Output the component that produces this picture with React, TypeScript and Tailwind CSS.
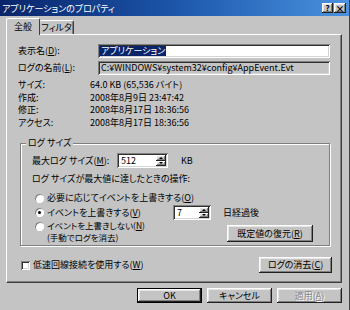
import React from "react";

const raised =
  "shadow-[inset_-1px_-1px_0_#202020,inset_1px_1px_0_#ffffff,inset_-2px_-2px_0_#808080,inset_2px_2px_0_#e6e6e6]";
const sunken =
  "shadow-[inset_1px_1px_0_#808080,inset_-1px_-1px_0_#ffffff,inset_2px_2px_0_#303030,inset_-2px_-2px_0_#d4d4d4]";

function Btn({ children, w, h = 16, disabled = false, def = false }: { children: React.ReactNode; w: number; h?: number; disabled?: boolean; def?: boolean }) {
  return (
    <div
      style={{ width: w, height: h }}
      className={`flex items-center justify-center bg-[#c4c4c4] ${def ? "border border-black" : ""}`}
    >
      <div
        className={`flex h-full w-full items-center justify-center whitespace-nowrap ${raised} ${
          disabled ? "text-[#8a8a8a] [text-shadow:1px_1px_0_#fff]" : "text-black"
        }`}
      >
        {children}
      </div>
    </div>
  );
}

function Spin({ value, w }: { value: string; w: number }) {
  return (
    <div style={{ width: w }} className={`flex h-[15px] items-stretch bg-white p-[2px] ${sunken}`}>
      <div className="flex flex-1 items-center pl-[2px] leading-none">{value}</div>
      <div className="flex w-[10px] flex-col">
        <div className={`flex flex-1 items-center justify-center bg-[#c4c4c4] ${raised}`}>
          <div className="h-0 w-0 border-x-[2px] border-b-[2px] border-x-transparent border-b-black" />
        </div>
        <div className={`flex flex-1 items-center justify-center bg-[#c4c4c4] ${raised}`}>
          <div className="h-0 w-0 border-x-[2px] border-t-[2px] border-x-transparent border-t-black" />
        </div>
      </div>
    </div>
  );
}

function Radio({ checked = false }: { checked?: boolean }) {
  return (
    <div className="relative h-[9px] w-[9px] shrink-0 rounded-full bg-white shadow-[inset_1px_1px_0_#808080,inset_-1px_-1px_0_#ffffff]">
      {checked && <div className="absolute left-[3px] top-[3px] h-[3px] w-[3px] rounded-full bg-black" />}
    </div>
  );
}

export default function App() {
  return (
    <div className="flex h-[310px] w-[350px] flex-col overflow-hidden whitespace-nowrap border-r border-r-[#404040] bg-[#c4c4c4] font-['Noto_Sans_CJK_JP',sans-serif] text-[9px] text-black [font-feature-settings:'palt']">
      {/* Title bar */}
      <div className="flex h-[16px] shrink-0 items-center justify-between bg-gradient-to-r from-[#0a246a] via-[#1c56aa] to-[#4a92e0] pl-[2px] pr-[3px]">
        <span className="leading-none text-white">アプリケーションのプロパティ</span>
        <div className="flex gap-[1px]">
          <div className={`flex h-[10px] w-[11px] items-center justify-center bg-[#c4c4c4] text-[8px] font-bold leading-none ${raised}`}>?</div>
          <div className={`flex h-[10px] w-[12px] items-center justify-center bg-[#c4c4c4] text-[9px] font-bold leading-none ${raised}`}>×</div>
        </div>
      </div>

      {/* Tabs */}
      <div className="relative z-10 ml-[6px] mt-[2px] flex items-end">
        <div className="-mb-[1px] flex h-[17px] w-[34px] items-center justify-center rounded-t-[2px] border-l border-t border-r border-l-white border-t-white border-r-[#404040] bg-[#c4c4c4] pb-[1px]">
          全般
        </div>
        <div className="flex h-[14px] w-[34px] items-center justify-center rounded-t-[2px] border-t border-r border-t-white border-r-[#404040] shadow-[inset_-1px_0_0_#808080]">
          フィルタ
        </div>
      </div>

      {/* Panel */}
      <div className="ml-[6px] flex h-[249px] w-[336px] shrink-0 flex-col border-l border-t border-b border-r border-l-white border-t-white border-b-[#404040] border-r-[#404040] pl-[11px] pt-[9px] shadow-[inset_-1px_-1px_0_#808080]">
        <div className="flex h-[14px] items-center">
          <span className="w-[80px]">表示名(<u>D</u>):</span>
          <div className={`flex h-[14px] w-[232px] items-center bg-white px-[2px] ${sunken}`}>
            <span className="bg-[#0a246a] px-[1px] leading-[10px] text-white">アプリケーション</span>
          </div>
        </div>
        <div className="mt-[3px] flex h-[14px] items-center">
          <span className="w-[80px]">ログの名前(<u>L</u>):</span>
          <div className={`flex h-[14px] w-[232px] items-center px-[3px] ${sunken}`}>
            C:¥WINDOWS¥system32¥config¥AppEvent.Evt
          </div>
        </div>
        <div className="mt-[4px] flex flex-col leading-[12.5px]">
          {[
            ["サイズ:", "64.0 KB (65,536 バイト)"],
            ["作成:", "2008年8月9日 23:47:42"],
            ["修正:", "2008年8月17日 18:36:56"],
            ["アクセス:", "2008年8月17日 18:36:56"],
          ].map(([k, v]) => (
            <div key={k} className="flex h-[12.5px] items-center">
              <span className="w-[72px]">{k}</span>
              <span>{v}</span>
            </div>
          ))}
        </div>

        {/* Group box */}
        <div className="relative ml-[2px] mt-[14px] flex h-[103px] w-[310px] flex-col border border-[#808080] shadow-[1px_1px_0_#fff,inset_1px_1px_0_#fff]">
          <span className="absolute -top-[7px] left-[5px] bg-[#c4c4c4] px-[2px] leading-[12px]">ログ サイズ</span>
          <div className="ml-[11px] mt-[9px] flex h-[15px] items-center">
            <span className="w-[85px]">最大ログ サイズ(<u>M</u>):</span>
            <Spin value="512" w={51} />
            <span className="ml-[13px]">KB</span>
          </div>
          <div className="ml-[11px] mt-[5px] flex h-[12px] items-center">ログ サイズが最大値に達したときの操作:</div>
          <div className="ml-[14px] mt-[7px] flex h-[12px] items-center gap-[3px]">
            <Radio />
            <span>必要に応じてイベントを上書きする(<u>O</u>)</span>
          </div>
          <div className="ml-[14px] mt-[1px] flex h-[15px] items-center">
            <div className="flex w-[138px] items-center gap-[3px]">
              <Radio checked />
              <span>イベントを上書きする(<u>V</u>)</span>
            </div>
            <Spin value="7" w={38} />
            <span className="ml-[12px]">日経過後</span>
          </div>
          <div className="ml-[14px] mt-[0px] flex items-start">
            <div className="flex items-start gap-[3px]">
              <div className="mt-[2px]">
                <Radio />
              </div>
              <div className="flex flex-col text-[8.5px] leading-[11.5px]">
                <span className="leading-[11.5px]">イベントを上書きしない(<u>N</u>)</span>
                <span className="leading-[11.5px]">(手動でログを消去)</span>
              </div>
            </div>
            <div className="ml-auto mr-[16px] mt-[5px]">
              <Btn w={86} h={17}>既定値の復元(<u>R</u>)</Btn>
            </div>
          </div>
        </div>

        <div className="mt-[11px] flex h-[16px] w-[314px] items-center">
          <div className={`ml-[3px] h-[9px] w-[9px] bg-white ${sunken}`} />
          <span className="ml-[3px]">低速回線接続を使用する(<u>W</u>)</span>
          <div className="ml-auto">
            <Btn w={73} h={16}>ログの消去(<u>C</u>)</Btn>
          </div>
        </div>
      </div>

      {/* Bottom buttons */}
      <div className="mt-[5px] flex justify-end gap-[5px] pr-[7px]">
        <Btn w={65} h={15} def>OK</Btn>
        <Btn w={65} h={15}>キャンセル</Btn>
        <Btn w={65} h={15} disabled>適用(<u>A</u>)</Btn>
      </div>
    </div>
  );
}
